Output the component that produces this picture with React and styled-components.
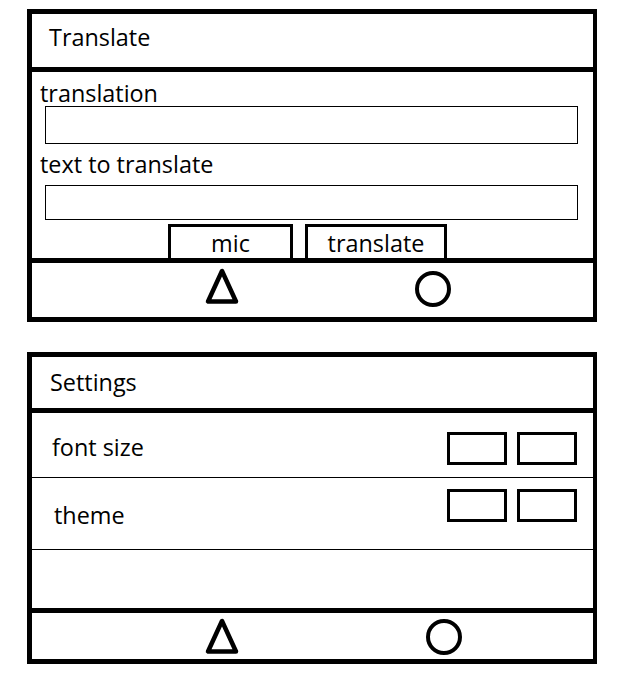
import styled, { createGlobalStyle } from 'styled-components';

const Global = createGlobalStyle`
  body {
    margin: 0;
    background: #fff;
    font-family: 'Open Sans', 'Noto Sans', sans-serif;
    color: #000;
  }
`;

const Page = styled.div`
  display: flex;
  flex-direction: column;
  gap: 30px;
  padding: 9px 0 0 27px;
`;

// 화면 하나
const Panel = styled.section`
  width: 570px;
  box-sizing: border-box;
  border: solid #000;
  border-width: 5px 4px 5px 5px;
  display: flex;
  flex-direction: column;
`;

const Header = styled.div`
  height: ${(p) => p.$h}px;
  padding: ${(p) => p.$top}px 17px 0 ${(p) => p.$indent}px;
  border-bottom: 5px solid #000;
  font-size: 23.4px;
  line-height: 24px;
`;

const Body = styled.div`
  height: ${(p) => p.$h}px;
  display: flex;
  flex-direction: column;
  border-bottom: 5px solid #000;
`;

const Label = styled.div`
  font-size: 23.4px;
  line-height: 24px;
  padding-left: 8px;
  margin-top: ${(p) => p.$mt}px;
`;

const Field = styled.div`
  height: ${(p) => p.$h}px;
  box-sizing: border-box;
  border: 1px solid #000;
  margin: ${(p) => p.$mt}px 15px 0 13px;
`;

const ButtonRow = styled.div`
  display: flex;
  gap: 12px;
  margin-top: 4px;
  padding-left: 136px;
`;

const Button = styled.button`
  width: ${(p) => p.$w}px;
  height: 34px;
  box-sizing: border-box;
  border: 3px solid #000;
  border-bottom: none;
  background: #fff;
  padding: 0;
  font-family: inherit;
  font-size: 23.4px;
  line-height: 28px;
  color: #000;
  display: block;
  text-align: center;
  align-self: flex-start;
`;

const Footer = styled.div`
  height: ${(p) => p.$h}px;
  display: flex;
  align-items: flex-start;
  padding: 5px 0 0 173px;
  box-sizing: border-box;
`;

const CircleWrap = styled.div`
  margin-left: ${(p) => p.$gap}px;
  margin-top: ${(p) => p.$mt}px;
  display: flex;
`;

const Row = styled.div`
  height: ${(p) => p.$h}px;
  box-sizing: border-box;
  padding: 3px 16px 0 ${(p) => p.$indent}px;
  border-bottom: 1px solid #000;
  display: flex;
  align-items: center;
  justify-content: space-between;
  font-size: 23.4px;
  line-height: 24px;
`;

const BoxGroup = styled.div`
  display: flex;
  gap: 10px;
  margin-top: ${(p) => p.$drop || 0}px;
  margin-bottom: ${(p) => p.$raise || 0}px;
`;

const Box = styled.div`
  width: 60px;
  height: 33px;
  box-sizing: border-box;
  border: 3px solid #000;
`;

const Triangle = () => (
  <svg width="34" height="36" viewBox="0 0 34 36">
    <polygon
      points="17,3 3,33.5 31,33.5"
      fill="none"
      stroke="#000"
      strokeWidth="4.5"
      strokeLinejoin="round"
    />
  </svg>
);

const Circle = () => (
  <svg width="36" height="36" viewBox="0 0 36 36">
    <circle cx="18" cy="18" r="16" fill="none" stroke="#000" strokeWidth="4" />
  </svg>
);

const App = () => {
  return (
    <>
      <Global />
      <Page>
        <Panel>
          <Header $h={42} $top={11} $indent={17}>
            Translate
          </Header>
          <Body $h={186}>
            <Label $mt={9}>translation</Label>
            <Field $h={38} $mt={1} />
            <Label $mt={8}>text to translate</Label>
            <Field $h={35} $mt={9} />
            <ButtonRow>
              <Button $w={125}>mic</Button>
              <Button $w={142}>translate</Button>
            </ButtonRow>
          </Body>
          <Footer $h={54}>
            <Triangle />
            <CircleWrap $gap={176} $mt={3}>
              <Circle />
            </CircleWrap>
          </Footer>
        </Panel>

        <Panel>
          <Header $h={38} $top={13} $indent={18}>
            Settings
          </Header>
          <Body $h={195}>
            <Row $h={65} $indent={20}>
              font size
              <BoxGroup $drop={3}>
                <Box />
                <Box />
              </BoxGroup>
            </Row>
            <Row $h={72} $indent={22}>
              theme
              <BoxGroup $raise={20}>
                <Box />
                <Box />
              </BoxGroup>
            </Row>
          </Body>
          <Footer $h={46}>
            <Triangle />
            <CircleWrap $gap={187} $mt={1}>
              <Circle />
            </CircleWrap>
          </Footer>
        </Panel>
      </Page>
    </>
  );
};

export default App;
